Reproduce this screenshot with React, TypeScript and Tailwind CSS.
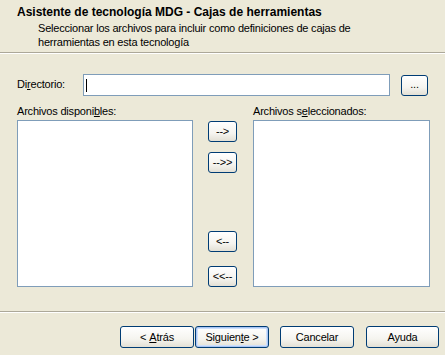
import { clsx } from 'clsx'

function XpButton({
  children,
  className,
  isDefault,
}: {
  children: React.ReactNode
  className?: string
  isDefault?: boolean
}) {
  return (
    <button
      className={clsx(
        'flex items-center justify-center rounded-[3px] border border-[#003C74] text-[11px] leading-none text-black',
        'bg-[linear-gradient(to_bottom,#FFFFFF_0%,#F5F4EF_60%,#E3E0D5_100%)]',
        isDefault && 'shadow-[inset_0_0_0_1px_#A9C6F5,inset_0_0_0_2px_#CEE0FB]',
        className,
      )}
    >
      {children}
    </button>
  )
}

export default function App() {
  return (
    <div className="w-[445px] h-[355px] bg-[#ECE9D8] flex flex-col text-black font-['Liberation_Sans',Arial,sans-serif] text-[11px] tracking-[-0.2px] overflow-hidden">
      {/* Header */}
      <div className="h-[52px] pl-[17px] pt-[5px]">
        <div className="font-bold text-[12px] leading-[14px] tracking-normal">
          Asistente de tecnología MDG - Cajas de herramientas
        </div>
        <div className="pl-[21px] leading-[14px] mt-[2px]">
          Seleccionar los archivos para incluir como definiciones de cajas de
          <br />
          herramientas en esta tecnología
        </div>
      </div>
      <div className="h-[2px] border-t border-[#ACA899] border-b border-b-white" />

      {/* Body */}
      <div className="h-[257px] pl-[17px] flex flex-col">
        <div className="mt-[20px] flex items-start h-[22px]">
          <div className="w-[66px] pt-[3px] leading-[14px]">
            Di<span className="underline">r</span>ectorio:
          </div>
          <div className="w-[307px] h-[22px] bg-white border border-[#7F9DB9] flex items-center pl-[2px]">
            <div className="w-px h-[13px] bg-black" />
          </div>
          <XpButton className="ml-[11px] mt-px w-[27px] h-[21px] items-end pb-[5px] text-[#6B0087]">
            ...
          </XpButton>
        </div>

        <div className="mt-[8px] flex">
          <div className="flex flex-col">
            <div className="leading-[14px] h-[16px]">
              Archivos disponi<span className="underline">b</span>les:
            </div>
            <div className="w-[176px] h-[167px] bg-white border border-[#7F9DB9]" />
          </div>

          <div className="w-[60px] pt-[17px] flex flex-col items-start pl-[15px]">
            <XpButton className="w-[29px] h-[21px]">--&gt;</XpButton>
            <XpButton className="w-[29px] h-[21px] mt-[10px]">--&gt;&gt;</XpButton>
            <XpButton className="w-[29px] h-[21px] mt-[58px]">&lt;--</XpButton>
            <XpButton className="w-[29px] h-[21px] mt-[14px]">&lt;&lt;--</XpButton>
          </div>

          <div className="flex flex-col">
            <div className="leading-[14px] h-[16px]">
              Archivos s<span className="underline">e</span>leccionados:
            </div>
            <div className="w-[177px] h-[167px] bg-white border border-[#7F9DB9]" />
          </div>
        </div>
      </div>

      {/* Footer */}
      <div className="h-[2px] border-t border-[#ACA899] border-b border-b-white" />
      <div className="flex pl-[120px] pt-[13px]">
        <XpButton className="w-[74px] h-[22px]">
          &lt; <span className="underline ml-[3px]">A</span>trás
        </XpButton>
        <XpButton isDefault className="w-[74px] h-[22px] ml-[1px]">
          Siguien<span className="underline">t</span>e &gt;
        </XpButton>
        <XpButton className="w-[74px] h-[22px] ml-[11px]">Cancelar</XpButton>
        <XpButton className="w-[73px] h-[22px] ml-[12px]">Ayuda</XpButton>
      </div>
    </div>
  )
}
